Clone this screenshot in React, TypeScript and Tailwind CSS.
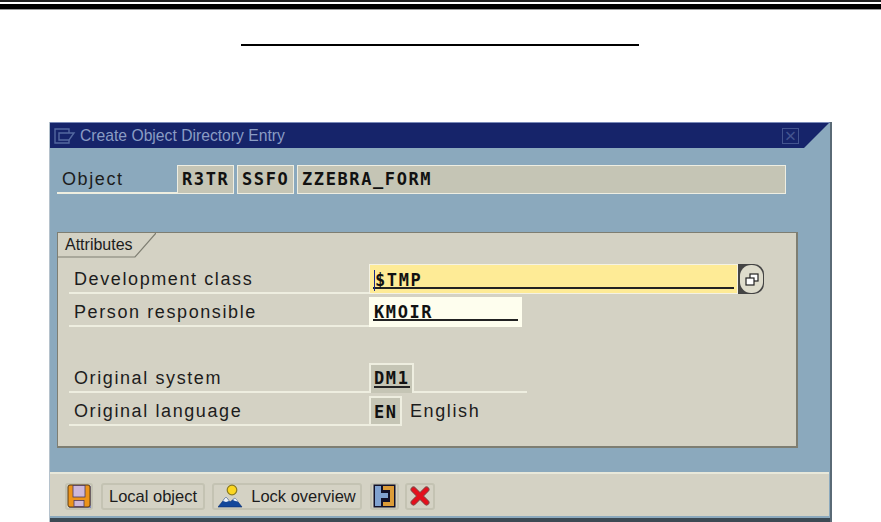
const FIELD_FONT = "font-['DejaVu_Sans_Mono',monospace] font-bold text-[17px] tracking-[1.6px] text-[#111]";
const LABEL_FONT = "font-['Liberation_Sans',Arial,sans-serif] text-[18px] tracking-[1.6px] text-[#1c1c1c]";

function SaveIcon() {
  return (
    <svg width="24" height="24" viewBox="0 0 24 24">
      <rect x="2" y="2" width="22" height="22" fill="#7f86b8" />
      <rect x="1" y="1" width="22" height="22" rx="2" fill="#ec931a" stroke="#5a3a10" strokeWidth="1" />
      <rect x="6" y="1.5" width="12" height="11.5" fill="#cdb8da" stroke="#4a3a60" strokeWidth="0.8" />
      <rect x="7" y="16.5" width="10" height="6" fill="#cdb8da" stroke="#4a3a60" strokeWidth="0.8" />
    </svg>
  );
}

function LockOverviewIcon() {
  return (
    <svg width="25" height="26" viewBox="0 0 25 26">
      <circle cx="14" cy="7" r="4.8" fill="#fbd620" stroke="#8a7a20" strokeWidth="1.2" />
      <path d="M0 24 L8 14 L12 19 L17 15 L24 24 Z" fill="#13479a" stroke="#0c2f70" strokeWidth="0.6" />
      <path d="M5 18 L8 14 L11 18 L8 19 Z M15 17 L17 15 L20 18.5 L17 18 Z" fill="#eef2f8" />
    </svg>
  );
}

function LayoutIcon() {
  return (
    <svg width="23" height="24" viewBox="0 0 23 24">
      <rect x="0.5" y="0.5" width="22" height="23" fill="#12122a" />
      <path d="M2 2 H8 V9 H15 V14 H8 V22 H2 Z" fill="#80a2d0" />
      <path d="M10 2 H21 V22 H10 V18 H17 V6 H10 Z" fill="#dc9c38" />
    </svg>
  );
}

function CancelIcon() {
  return (
    <svg width="20" height="20" viewBox="0 0 20 20" fill="none" strokeLinecap="round">
      <path d="M3.5 3.5 L16.5 16.5 M16.5 3.5 L3.5 16.5" stroke="#8a4a4a" strokeWidth="6" />
      <path d="M3.5 3.5 L16.5 16.5 M16.5 3.5 L3.5 16.5" stroke="#e4101c" strokeWidth="4" />
    </svg>
  );
}

function WindowGlyph() {
  return (
    <svg width="23" height="18" viewBox="0 0 23 18" fill="none" stroke="#5468a0" strokeWidth="1.4">
      <path d="M16 6 V2 H2 V16 H16 V13" />
      <path d="M6 6 H21 L16 13 H6 Z" />
    </svg>
  );
}

function SearchHelpButton() {
  return (
    <div className="flex h-[30px] w-[26px] items-center justify-end rounded-r-[10px] bg-[#444]">
      <div className="mr-[1px] flex h-[28px] w-[23px] items-center justify-center rounded-[11px] bg-[#dedccc]">
        <svg width="14" height="13" viewBox="0 0 14 13">
          <rect x="5" y="1" width="8" height="7" fill="#fff" stroke="#222" strokeWidth="1.2" />
          <rect x="1" y="5" width="8" height="7" fill="#fff" stroke="#222" strokeWidth="1.2" />
        </svg>
      </div>
    </div>
  );
}

function Readonly({ text, width }: { text: string; width: string }) {
  return (
    <div className={`flex h-[29px] items-center border border-[#eeeee2] bg-[#c5c5b5] pl-[4px] pt-[1px] ${width} ${FIELD_FONT}`}>
      {text}
    </div>
  );
}

function Row({ label, children }: { label: string; children: React.ReactNode }) {
  return (
    <div className="flex h-[30px] items-stretch">
      <div className={`flex w-[300px] items-center border-b-2 border-[#eeeee0] pl-[5px] pt-[2px] ${LABEL_FONT}`}>{label}</div>
      {children}
    </div>
  );
}

function ToolButton({ width, className, children }: { width: string; className?: string; children: React.ReactNode }) {
  return (
    <div className={`flex h-[27px] items-center justify-center rounded-[3px] border-2 border-[#c4c3b3] font-['Liberation_Sans',Arial,sans-serif] text-[16.5px] text-[#1c1c1c] ${width} ${className ?? ""}`}>
      {children}
    </div>
  );
}

export default function App() {
  return (
    <div className="h-[522px] w-[881px] overflow-hidden bg-white">
      <div className="h-[2px] bg-[#222]" />
      <div className="mt-[2px] h-[5px] bg-black" />
      <div className="h-[1px] bg-[#999]" />
      <div className="ml-[241px] mt-[34px] h-[2px] w-[398px] bg-black" />

      <div className="ml-[49px] mt-[76px] flex h-[400px] w-[783px] flex-col border-l border-r-[2px] border-l-[#b5c2cc] border-r-[#5a6a76] bg-[#8ba9bd]">
        <div className="flex h-[26px] items-center justify-between border-t border-[#7a8ab8] bg-[#16246a] pl-[3px] pr-[31px] [clip-path:polygon(0_0,100%_0,calc(100%-26px)_100%,0_100%)]">
          <div className="flex items-center gap-[4px] pt-[1px] font-['Liberation_Sans',Arial,sans-serif] text-[15.7px] text-[#8a9cc4]">
            <WindowGlyph />
            Create Object Directory Entry
          </div>
          <div className="flex h-[16px] w-[17px] items-center justify-center border border-[#43548f] text-[20px] leading-none text-[#43548f]">×</div>
        </div>

        <div className="flex-1 pl-[7px]">
          <div className="mt-[17px] flex h-[29px] items-stretch gap-[3px]">
            <div className={`-mr-[3px] flex w-[120px] items-center border-b-2 border-[#eeeee0] pl-[5px] pt-[2px] ${LABEL_FONT}`}>Object</div>
            <Readonly text="R3TR" width="w-[57px]" />
            <Readonly text="SSFO" width="w-[57px]" />
            <Readonly text="ZZEBRA_FORM" width="w-[489px]" />
          </div>

          <div className="mt-[38px] h-[216px] w-[741px] border-r-2 border-b-2 border-t border-l border-[#7e7e72] bg-[#d4d2c4]">
            <div className="relative h-[24px] w-[98px]">
              <span className="absolute left-[7px] top-0 font-['Liberation_Sans',Arial,sans-serif] text-[16px] text-[#1c1c1c]">Attributes</span>
              <svg className="absolute inset-0" width="98" height="25" viewBox="0 0 98 25" fill="none" stroke="#7e7e72" strokeWidth="1.2">
                <path d="M0 24 H77 L98 0" />
              </svg>
            </div>

            <div className="ml-[11px] mt-[7px] flex flex-col gap-[3px]">
              <Row label="Development class">
                <div className="flex w-[369px] border border-[#f4f2e4] bg-[#feeb96] px-[3px] pt-[1px]">
                  <div className={`h-[23px] flex-1 border-b-2 border-[#222] pl-[1px] pt-[2px] ${FIELD_FONT}`}>
                    <span className="inline-block border-l border-[#1a2a8a] leading-[21px]">$TMP</span>
                  </div>
                </div>
                <SearchHelpButton />
              </Row>
              <Row label="Person responsible">
                <div className="flex w-[153px] bg-[#fefeee] px-[4px] pt-[1px]">
                  <div className={`h-[23px] flex-1 border-b-2 border-[#222] pl-[1px] pt-[2px] ${FIELD_FONT}`}>KMOIR</div>
                </div>
              </Row>
              <div className="h-[30px]" />
              <Row label="Original system">
                <div className="flex w-[45px] border-2 border-b-0 border-[#eeeee0] bg-[#c5c5b5] px-[3px]">
                  <div className={`h-[23px] flex-1 border-b-2 border-[#222] pt-[1px] ${FIELD_FONT}`}>DM1</div>
                </div>
                <div className="w-[113px] border-b-2 border-[#eeeee0]" />
              </Row>
              <Row label="Original language">
                <div className={`flex w-[33px] items-center border-2 border-[#eeeee0] bg-[#c5c5b5] pl-[3px] pt-[3px] ${FIELD_FONT}`}>EN</div>
                <div className={`flex items-center pl-[8px] pt-[1px] ${LABEL_FONT}`}>English</div>
              </Row>
            </div>
          </div>
        </div>

        <div className="mr-[1px] flex h-[44px] items-center border-t-2 border-[#e8e8da] bg-[#d4d2c4] pl-[15px] pt-[2px]">
          <ToolButton width="w-[28px]"><SaveIcon /></ToolButton>
          <ToolButton width="w-[104px]" className="ml-[8px]"><span className="pt-[1px]">Local object</span></ToolButton>
          <ToolButton width="w-[150px]" className="ml-[7px] gap-[8px]"><LockOverviewIcon /><span className="pt-[1px]">Lock overview</span></ToolButton>
          <ToolButton width="w-[29px]" className="ml-[8px]"><LayoutIcon /></ToolButton>
          <ToolButton width="w-[30px]" className="ml-[6px]"><CancelIcon /></ToolButton>
        </div>
        <div className="h-[2px] bg-[#8ba9bd]" />
        <div className="h-[4px] bg-[#3c4a54]" />
      </div>
    </div>
  );
}
